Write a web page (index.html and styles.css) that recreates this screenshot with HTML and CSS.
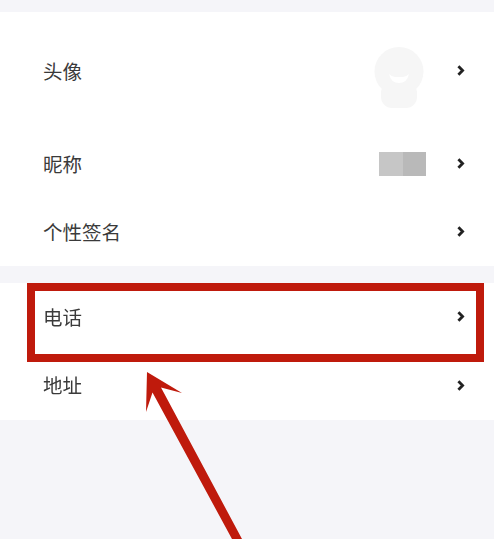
FILE: index.html
```html
<!DOCTYPE html>
<html lang="zh-CN">
<head>
    <meta charset="UTF-8">
    <meta name="viewport" content="width=device-width, initial-scale=1.0">
    <title>个人信息</title>
    <link rel="stylesheet" href="styles.css">
</head>
<body>
    <div class="page">
        <div class="group">
            <div class="row row-avatar">
                <span class="label">头像</span>
                <svg class="avatar" width="52" height="64" viewBox="0 0 52 64">
                    <circle cx="26" cy="26.500" r="24.500" fill="#f6f6f6"/>
                    <rect x="8" y="37" width="36" height="26" rx="11" fill="#f6f6f6"/>
                    <path d="M16 29q3 3 6 3h8q3 0 6-3q-2 9-10 9t-10-9z" fill="#fff"/>
                </svg>
                <svg class="chevron" width="8" height="11" viewBox="0 0 8 11"><path d="M1.400 1.200 5.600 5.500 1.400 9.800" fill="none" stroke="#222" stroke-width="2.800"/></svg>
            </div>
            <div class="row">
                <span class="label">昵称</span>
                <div class="nickname"><i></i><i></i></div>
                <svg class="chevron" width="8" height="11" viewBox="0 0 8 11"><path d="M1.400 1.200 5.600 5.500 1.400 9.800" fill="none" stroke="#222" stroke-width="2.800"/></svg>
            </div>
            <div class="row">
                <span class="label">个性签名</span>
                <svg class="chevron" width="8" height="11" viewBox="0 0 8 11"><path d="M1.400 1.200 5.600 5.500 1.400 9.800" fill="none" stroke="#222" stroke-width="2.800"/></svg>
            </div>
        </div>
        <div class="group group-last">
            <div class="row">
                <span class="label">电话</span>
                <svg class="chevron" width="8" height="11" viewBox="0 0 8 11"><path d="M1.400 1.200 5.600 5.500 1.400 9.800" fill="none" stroke="#222" stroke-width="2.800"/></svg>
            </div>
            <div class="row">
                <span class="label">地址</span>
                <svg class="chevron chevron-center" width="8" height="11" viewBox="0 0 8 11"><path d="M1.400 1.200 5.600 5.500 1.400 9.800" fill="none" stroke="#222" stroke-width="2.800"/></svg>
            </div>
        </div>

        <!-- red markup drawn over the screenshot -->
        <div class="highlight"></div>
        <svg class="arrow" width="494" height="539" viewBox="0 0 494 539">
            <path d="M147 372 182 393 161 387.500 242 539H232L152.500 392.500 146 412z" fill="#bf1a0c"/>
        </svg>
    </div>
</body>
</html>
```

FILE: styles.css
```css
html, body {
    margin: 0;
    height: 100%;
}

body {
    background-color: #f5f5f9;
    color: #3a3a3a;
    font-family: 'Noto Sans CJK SC', 'Noto Sans', sans-serif;
    overflow: hidden;
}

.page {
    position: relative;
    height: 539px;
    padding-top: 12px;
    box-sizing: border-box;
    filter: blur(0.4px);
}

.group {
    background-color: #fff;
    margin-bottom: 17px;
}

.group-last {
    padding-bottom: 1px;
}

.row {
    display: flex;
    align-items: center;
    height: 68px;
    padding: 0 29px 0 43px;
}

.row-avatar {
    height: 118px;
}

.label {
    flex: 1;
    font-size: 19.5px;
    line-height: 28px;
}

.avatar {
    margin: 12px 32px 0 0;
}

.nickname {
    display: flex;
    width: 47px;
    height: 24px;
    margin-right: 31px;
}

.nickname i {
    flex: 1;
    background-color: #c6c6c6;
}

.nickname i + i {
    background-color: #b9b9b9;
}

.chevron {
    flex: none;
    margin-top: -1px;
}

.chevron-center {
    margin-top: 0;
}

.highlight {
    position: absolute;
    left: 27px;
    top: 283px;
    width: 441px;
    height: 63px;
    border: 8px solid #bf1a0c;
}

.arrow {
    position: absolute;
    left: 0;
    top: 0;
}
```
